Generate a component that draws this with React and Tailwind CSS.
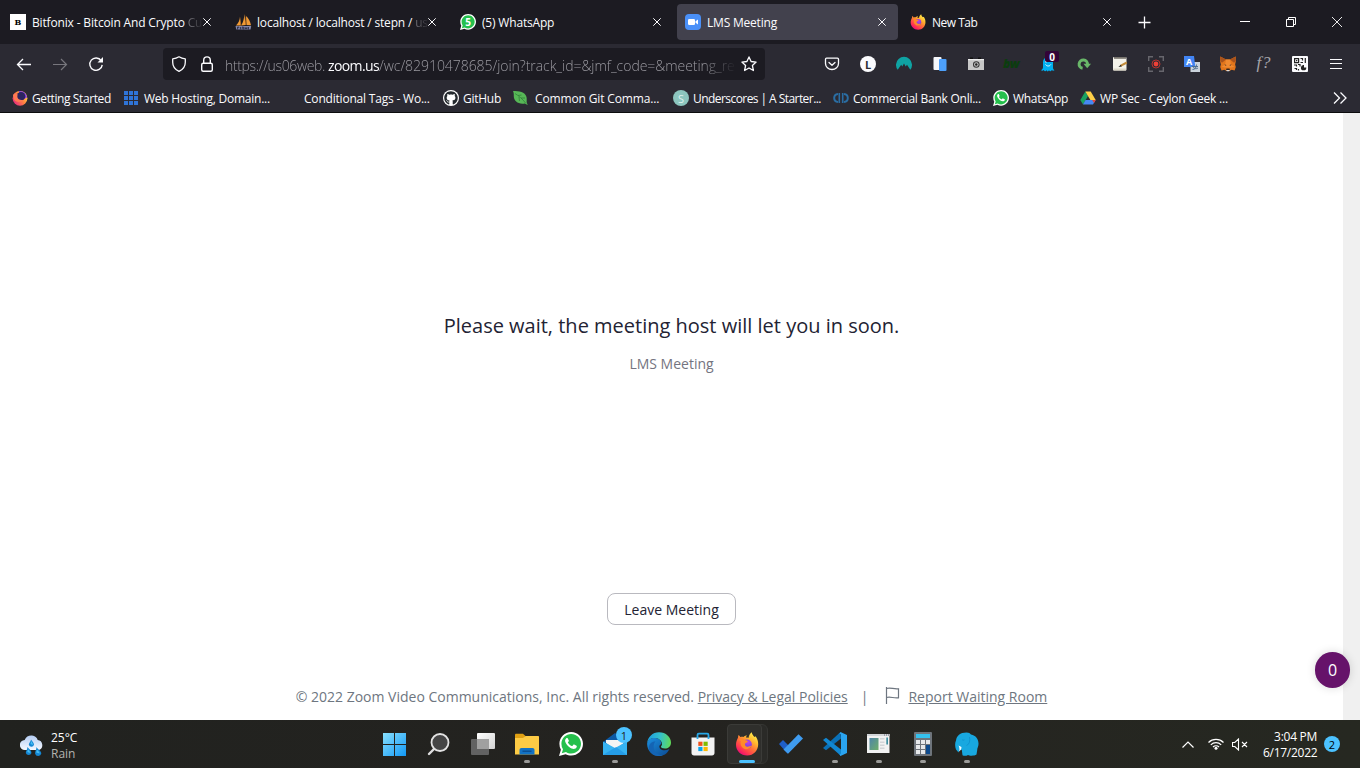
import React from "react";
import { FaGithub } from "react-icons/fa";

/* ---------- shared icons ---------- */

function Firefox({ id, className }) {
  return (
    <svg viewBox="0 0 24 24" className={className}>
      <defs>
        <linearGradient id={id + "a"} x1="0.85" y1="0.05" x2="0.2" y2="0.95">
          <stop offset="0" stopColor="#fff44f" />
          <stop offset="0.3" stopColor="#ffb52e" />
          <stop offset="0.55" stopColor="#ff7139" />
          <stop offset="0.8" stopColor="#ff3750" />
          <stop offset="1" stopColor="#eb0878" />
        </linearGradient>
        <radialGradient id={id + "b"} cx="0.6" cy="0.3" r="0.8">
          <stop offset="0" stopColor="#c13fe6" />
          <stop offset="0.5" stopColor="#8a42e0" />
          <stop offset="1" stopColor="#5b3fd0" />
        </radialGradient>
      </defs>
      <path
        fill={"url(#" + id + "a)"}
        d="M12.2 23.500C5.800 23.500 1 18.700 1 12.700c0-2.600.9-5.200 2-7 0-1 .2-1.800.6-2.600.8.6 1.300 1.200 1.700 2 1.200-.4 2.200-.4 3.200-.1C9.500 4 11 3.400 12 3.600c-.6.6-1 1.300-1.100 2 1-.1 1.800.1 2.500.4.6-2.500 1.600-4.500 3.400-5.700.2 2.100 1.400 3.300 2.700 4.600l1-.6c1.900 2.400 2.700 5 2.700 7.900 0 6-4.600 11.300-11 11.300z"
      />
      <circle cx="12.200" cy="12.200" r="4.600" fill={"url(#" + id + "b)"} />
      <path fill="#ff8a2a" d="M3.500 7.700c2.200-1.400 4.800-.9 6.300.4 1.700.3 2.600.7 3.100 1.300-.9 1.500-2.300 1.300-2.900 2.300-.3 1.500.6 2.800 2.400 3.100 1.500.2 2.500-.8 3.900-.7-1.200 2.800-4.400 3.800-7.100 2.600C5.600 15 5 10.800 6 9z" />
    </svg>
  );
}

function GettingStarted({ className }) {
  return (
    <svg viewBox="0 0 16 16" className={className}>
      <defs>
        <linearGradient id="gsa" x1="0.9" y1="0.2" x2="0.1" y2="0.8">
          <stop offset="0" stopColor="#ffd84a" />
          <stop offset="0.45" stopColor="#ff8440" />
          <stop offset="1" stopColor="#e8307a" />
        </linearGradient>
      </defs>
      <circle cx="8" cy="8.300" r="7.400" fill="url(#gsa)" />
      <path fill="#8a3de8" d="M7 1c4.500-.4 7.500 2.600 8 6.500L12 9 7 2.500z" />
      <circle cx="9" cy="6.200" r="4.300" fill="#2c2560" />
      <path fill="#ff7a52" d="M1 5c1.500-2 3-1.800 4.200-1C6 5 5 6 5.500 7.500c.5 2 3 3 6 2.200-1.500 3-8 3-9.500-.2z" />
    </svg>
  );
}

function WhatsAppIcon({ className, glyph, children }) {
  return (
    <span className={"relative grid shrink-0 place-items-center " + className}>
      <svg viewBox="0 0 24 24" className="absolute inset-0 size-full">
        <path fill="#fff" d="M12.200 0C18.700 0 24 5.200 24 11.800S18.700 23.600 12.200 23.600c-2 0-4-.5-5.600-1.400L0 24l1.900-6.300A11.700 11.700 0 0 1 .4 11.800C.4 5.200 5.700 0 12.200 0z" />
        <path fill="#25c04c" d="M12.200 2c5.400 0 9.800 4.400 9.800 9.800s-4.400 9.800-9.800 9.800c-1.900 0-3.700-.5-5.200-1.500L2.800 21.300l1.200-4A9.700 9.700 0 0 1 2.400 11.800C2.400 6.400 6.800 2 12.200 2z" />
        {glyph && (
          <path fill="#fff" d="M8.800 6.500c-.3-.6-1.300-.5-1.700 0-.8.800-1.200 1.800-.9 3 .5 2 2.200 4.300 4.300 5.800 1.600 1.200 3.800 2 5.300 1.500 1-.4 1.900-1.100 2-2.300 0-.4 0-.6-.3-.8l-2.300-1.100c-.4-.2-.6-.1-.9.2l-.9 1.100c-.2.2-.4.3-.7.1-1.500-.6-2.800-1.700-3.700-3.200-.2-.3-.1-.5.1-.7l.7-.9c.1-.2.1-.5 0-.7z" />
        )}
      </svg>
      {children}
    </span>
  );
}

function CloseX() {
  return (
    <svg viewBox="0 0 8 8" className="size-2 shrink-0" stroke="#fbfbfe" strokeWidth="1" fill="none">
      <path d="M.3.3l7.400 7.400M7.700.3L.3 7.700" />
    </svg>
  );
}

/* ---------- tab strip ---------- */

function Tab({ icon, title, faded, active, tracking }) {
  return (
    <div className={"mr-1 flex h-9 w-[221px] shrink-0 items-center rounded pr-3 pl-2 " + (active ? "bg-[#42414d]" : "")}>
      <span className="grid size-4 shrink-0 place-items-center">{icon}</span>
      <span className={"ml-1.5 min-w-0 flex-1 overflow-hidden pt-0.5 text-xs whitespace-nowrap text-[#fbfbfe] " + tracking}>
        {title}
        {faded && (
          <span className="bg-linear-to-r from-[#77767c] to-[#2a2930] bg-clip-text text-transparent">{faded}</span>
        )}
      </span>
      <CloseX />
    </div>
  );
}

function PhpMyAdmin() {
  return (
    <svg viewBox="0 0 17 16" className="h-4 w-[17px] max-w-none">
      <path fill="#f09a35" d="M5 2.500C4.800 6 3.500 9 1 11.500h4.600zM9.500 0C9 4 8.500 8 6.200 11.500l4.300-.5zM11 2c2.500 2 4.300 5.500 5 9.200L11.500 11z" />
      <path fill="#c87820" d="M5.300 3l1 8.500h-1zM10 .5l1 10.500h-1z" />
      <path fill="#8286ab" d="M.5 12h15.700l-.7 3.500H1.300z" />
      <path stroke="#25253a" strokeWidth=".8" fill="none" d="M2.500 15.500V13h1.300v1.300M5.500 13v2.500M7.200 15v-2h1.200v2.500M10 13v2l1-1.200 1 1.200v-2M13.500 15.500V13" />
    </svg>
  );
}

function TabStrip() {
  return (
    <div className="flex h-11 items-center bg-[#1c1b22] pl-0.5">
      <Tab
        title="Bitfonix - Bitcoin And Crypto "
        faded="Cu"
        tracking="tracking-[-0.16px]"
        icon={<span className="grid size-4 place-items-center bg-white font-['DejaVu_Serif',serif] text-[8px] leading-none font-bold text-black">B</span>}
      />
      <Tab title="localhost / localhost / stepn / " faded="us" tracking="tracking-[-0.18px]" icon={<PhpMyAdmin />} />
      <Tab
        title="(5) WhatsApp"
        tracking="tracking-[-0.18px]"
        icon={
          <WhatsAppIcon className="size-4">
            <span className="relative text-[10px] leading-none font-bold text-white">5</span>
          </WhatsAppIcon>
        }
      />
      <Tab
        active
        title="LMS Meeting"
        tracking="tracking-[-0.2px]"
        icon={
          <svg viewBox="0 0 16 16" className="size-4">
            <rect width="16" height="16" rx="4" fill="#4a90f8" />
            <rect x="3" y="5" width="7" height="6" rx="1.300" fill="#fff" />
            <path fill="#fff" d="M10.500 7.200L13 5.400v5.200l-2.500-1.800z" />
          </svg>
        }
      />
      <Tab title="New Tab" tracking="tracking-[-0.5px]" icon={<Firefox id="t" className="size-4" />} />
      <svg viewBox="0 0 13 13" className="ml-[11px] size-[13px]" stroke="#fbfbfe" fill="none">
        <path d="M6.500 .5v12M.5 6.500h12" strokeWidth="1.300" />
      </svg>
      <div className="ml-auto flex h-full items-center">
        <svg viewBox="0 0 10 10" className="mr-9 size-2.5" stroke="#fff" fill="none">
          <path d="M0 4.500h10" />
        </svg>
        <svg viewBox="0 0 10 10" className="mr-9 size-2.5" stroke="#fff" fill="none">
          <path d="M.5 2.500h7v7h-7zM2.500 2.500v-2h7v7h-2" />
        </svg>
        <svg viewBox="0 0 10 10" className="mr-[18px] size-2.5" stroke="#fff" fill="none" strokeWidth=".9">
          <path d="M0 0l10 10M10 0L0 10" />
        </svg>
      </div>
    </div>
  );
}

/* ---------- navigation toolbar ---------- */

const extensions = [
  <svg key="pocket" viewBox="0 0 16 16" className="size-4" fill="none" stroke="#fbfbfe" strokeWidth="1.300" strokeLinejoin="round" strokeLinecap="round">
    <path d="M2.500 2.200h11c.6 0 1 .4 1 1V7.500a6.500 6 0 0 1-13 0V3.200c0-.6.4-1 1-1z" />
    <path d="M5 6.400l3 2.800 3-2.800" />
  </svg>,
  <span key="l" className="grid size-4 place-items-center rounded-full bg-[#fbfbfe] text-[11px] leading-none font-bold text-[#2b2a33]">L</span>,
  <svg key="nord" viewBox="0 0 16 16" className="size-4">
    <path fill="#0fa3a3" d="M1.700 13.800A8 8 0 1 1 14.300 13.800L11 8.800 9.700 10.600 8 7.600 6.300 10.600 5.200 8.800z" />
  </svg>,
  <svg key="tabs" viewBox="0 0 16 16" className="size-4">
    <rect x="1.500" y="1" width="8" height="13" rx="1" fill="#f5f7fb" />
    <rect x="7" y="3" width="7.500" height="12" rx="1" fill="#4da0fb" />
  </svg>,
  <svg key="camera" viewBox="0 0 16 16" className="size-4">
    <path fill="#111" d="M2 1.500h3v2H2zM10 1.500h3v2h-3z" />
    <rect x="0" y="3" width="16" height="11" fill="#c7c7c7" />
    <path fill="#eee" d="M0 3h16v1.200H0z" />
    <circle cx="8.300" cy="8.500" r="3.300" fill="#333" />
    <circle cx="8.300" cy="8.500" r="2.300" fill="#c4c4c4" />
    <circle cx="8.300" cy="8.500" r="1.200" fill="#222" />
  </svg>,
  <span key="bw" className="-ml-0.5 text-[12px] leading-none font-extrabold tracking-[-0.5px] text-[#0b3d0f] italic">bw</span>,
  <span key="ghost" className="relative flex size-4">
    <svg viewBox="0 0 16 16" className="size-4">
      <path fill="#00aef0" d="M3 6a5 5 0 0 1 10 0v5.500c0 1.500.7 2 1.500 2.700-1 .8-2 .5-2.700-.2-.8 1.500-2 1.500-2.800.3-.7 1.500-1.800 1.500-2.500 0-.8 1.200-2 1.200-2.700-.3-.8.7-1.900.9-2.800.2C2.500 13.400 3 12.500 3 11z" />
      <path stroke="#e8faff" strokeWidth="1" fill="none" d="M5.500 8.500c1.500 2 4 2 5.300 0" />
      <circle cx="6" cy="5.500" r="1" fill="#fff" />
    </svg>
    <span className="absolute -top-[5px] left-[5px] grid h-[11px] w-3.5 place-items-center rounded-xs bg-[#330438] text-[10px] leading-none font-bold text-white">0</span>
  </span>,
  <svg key="arrow" viewBox="0 0 16 16" className="size-4">
    <path d="M6.600 12.300A4.200 4.200 0 1 1 11.500 8.400" fill="none" stroke="#69b769" strokeWidth="3" />
    <path fill="#69b769" d="M7.500 7.700h7.500l-3.800 4.600z" />
  </svg>,
  <svg key="note" viewBox="0 0 16 16" className="size-4">
    <rect x="1" y="1" width="13.500" height="13.500" rx="1" fill="#f4f2ea" />
    <path fill="#77736d" d="M2 1h12v1.800H2z" />
    <path fill="#ddd8c9" d="M1.500 12.500h12.500v2H1.500z" />
    <path stroke="#c28b39" strokeWidth="2" d="M14.800 6.500L8.500 9.800" />
    <path fill="#222" d="M8.900 8.800l.8 1.700-3.300.6z" />
  </svg>,
  <svg key="record" viewBox="0 0 16 16" className="size-4" fill="none">
    <path stroke="#67666d" strokeWidth="1.400" d="M.7 5V.7H5M11 .7h4.300V5M15.300 11v4.300H11M5 15.300H.7V11" />
    <circle cx="8" cy="8" r="4" stroke="#b63430" />
    <circle cx="8" cy="8" r="2.400" fill="#ef4138" />
  </svg>,
  <span key="translate" className="relative size-4">
    <svg viewBox="0 0 16 16" className="absolute inset-0 size-4">
      <rect x="6.500" y="6" width="9.500" height="10" fill="#cbd3dc" />
      <path fill="#4285f4" d="M0 0h10l1.300 11H0z" />
      <path stroke="#4c6d91" fill="none" d="M8 10.500h6M9 9.500c0 3 3 4 5 2.500M12.500 8.500c0 3-1.500 5-4 5" />
    </svg>
    <span className="absolute top-px left-[2px] text-[9px] leading-none font-bold text-white">A</span>
  </span>,
  <svg key="fox" viewBox="0 0 16 16" className="size-4">
    <path fill="#e2761b" d="M.3.500L6 3.500h4L15.700.500 15.900 5l-.8 3.500.7 2.500-1.200 3.500-3-.8L9.500 15h-3l-2-1.300-3 .8L.2 11 .9 8.500.1 5z" />
    <path fill="#a8521c" d="M.3.500L6 3.500 2 6.700.3 5zM15.700.500L10 3.500l4 3.200L15.800 5z" />
    <path fill="#f08a30" d="M6 3.500h4l1 5.500 3.500 1.500-3 1H4.500l-3-1L5 9z" />
    <path fill="#3a2a22" d="M4.300 8.300l2 .8-.3 1zM11.700 8.300l-2 .8.3 1zM6.500 12.500h3l.4 1.400H6.100z" />
    <path fill="#ddd" d="M6.300 14h3.400l-.5 1.200H6.800z" />
  </svg>,
  <span key="f" className="-mt-1 font-['Liberation_Serif',serif] text-[17px] leading-none tracking-[0.8px] whitespace-nowrap text-[#a5a4a9] italic">f?</span>,
  <svg key="qr" viewBox="0 0 16 16" className="size-4">
    <rect width="16" height="16" rx="1" fill="#fbfbfe" />
    <path fill="none" stroke="#222" strokeWidth="1.200" d="M2.600 2.600h4v4h-4zM8.500 2.500h2v2M13.300 2v5M8.500 6.500h2.500M2 9h2.500v1.500M6 8.500h2v2M2.500 12.500h2v1.500M6.500 13v1.500" />
    <path fill="#222" d="M4 4h1.300v1.300H4zM12 9v2.500h2.300A2.700 2.700 0 1 1 12 9z" />
  </svg>,
  <svg key="menu" viewBox="0 0 12 16" className="h-4 w-3" stroke="#fbfbfe" strokeWidth="1.200">
    <path d="M0 3.500h12M0 7.500h12M0 12.500h12" />
  </svg>,
];

function NavBar() {
  return (
    <div className="flex h-10 items-center">
      <div className="flex w-[163px] shrink-0 items-center pl-4">
        <svg viewBox="0 0 16 16" className="size-4" fill="none" stroke="#fbfbfe" strokeWidth="1.300">
          <path d="M15 8.500H1.500M7 3L1.500 8.500 7 14" />
        </svg>
        <svg viewBox="0 0 16 16" className="ml-5 size-4" fill="none" stroke="#77767d" strokeWidth="1.200">
          <path d="M1 8.500h13.500M9 3l5.500 5.500L9 14" />
        </svg>
        <svg viewBox="0 0 16 16" className="ml-5 size-4" fill="none" stroke="#fbfbfe" strokeWidth="1.400">
          <path d="M13.200 4.700A6.200 6.200 0 1 0 14.200 8.800" />
          <path d="M9.500 6.500H15V1z" fill="#fbfbfe" stroke="none" />
        </svg>
      </div>
      <div className="flex h-8 w-[602px] shrink-0 items-center rounded bg-[#1c1b22] px-2">
        <svg viewBox="0 0 16 16" className="size-4" fill="none" stroke="#fbfbfe" strokeWidth="1.300" strokeLinejoin="round">
          <path d="M8 .8C6.200 2 4 2.700 1.700 2.900v3.300C1.700 10 4 13.500 8 15.300c4-1.800 6.300-5.300 6.300-9.100V2.900C12 2.700 9.800 2 8 .8z" />
        </svg>
        <svg viewBox="0 0 16 16" className="ml-3 size-4" fill="none" stroke="#fbfbfe" strokeWidth="1.400">
          <rect x="2.700" y="7.200" width="10.600" height="8" rx="1.500" />
          <path d="M4.700 7V4.200a3.300 3.300 0 0 1 6.600 0V7" />
        </svg>
        <div className="ml-2.5 w-[512px] overflow-hidden mask-r-from-[93%] mask-r-to-100% pt-[3px] text-sm leading-5 font-light whitespace-nowrap text-[#9a99a0]">
          <span className="inline-block w-[103px] tracking-[-0.35px]">https://us06web.</span>
          <span className="inline-block w-[51px] font-normal tracking-[-0.6px] text-[#fbfbfe]">zoom.us</span>
          <span className="tracking-[-0.05px]">/wc/82910478685/join?track_id=&amp;jmf_code=&amp;meeting_re</span>
        </div>
        <svg viewBox="0 0 16 16" className="ml-auto size-4 shrink-0" fill="none" stroke="#fbfbfe" strokeWidth="1.300" strokeLinejoin="round">
          <path d="M8 .900l2.100 4.600 5 .6-3.700 3.400 1 5L8 12l-4.400 2.500 1-5L.9 6.100l5-.6z" />
        </svg>
      </div>
      <div className="ml-auto flex items-center pr-1.5">
        {extensions.map((icon, i) => (
          <span key={i} className="grid h-9 w-9 place-items-center">
            {icon}
          </span>
        ))}
      </div>
    </div>
  );
}

/* ---------- bookmarks ---------- */

const bookmarks = [
  { title: "Getting Started", box: "w-[112px]", tracking: "tracking-[-0.4px]", icon: <GettingStarted className="size-4" /> },
  {
    title: "Web Hosting, Domain...",
    box: "w-[160px]",
    tracking: "tracking-[-0.23px]",
    icon: (
      <svg viewBox="0 0 14 14" className="size-3.5 -translate-x-px" fill="#2f74d8">
        <path d="M0 0h4v4H0zM5 0h4v4H5zM10 0h4v4h-4zM0 5h4v4H0zM5 5h4v4H5zM10 5h4v4h-4zM0 10h4v4H0zM5 10h4v4H5zM10 10h4v4h-4z" />
      </svg>
    ),
  },
  { title: "Conditional Tags - Wo...", box: "w-[159px]", tracking: "tracking-[-0.2px]", icon: null },
  {
    title: "GitHub",
    box: "w-[72px]",
    tracking: "tracking-[-0.27px]",
    icon: (
      <span className="grid size-4 place-items-center rounded-full bg-white">
        <FaGithub className="size-[14px] text-[#24292e]" />
      </span>
    ),
  },
  {
    title: "Common Git Comma...",
    box: "w-[158px]",
    tracking: "tracking-[-0.14px]",
    icon: (
      <svg viewBox="0 0 16 16" className="size-4 -translate-x-0.5">
        <path fill="#57b757" d="M0 1c6 0 12 .5 13.500 6 .5 2.500 0 4 .2 5.500l1 2.500-3-1.500C5 14.500 1 11 .8 6.500.8 4 .8 3 0 1z" />
        <path stroke="#2c7a35" fill="none" strokeWidth=".7" d="M2 3.500c4 2.500 7 5 11 10M5 5.500l3.500-.5M8 8h4M6 7l.5 4" />
      </svg>
    ),
  },
  {
    title: "Underscores | A Starter...",
    box: "w-[160px]",
    tracking: "tracking-[-0.56px]",
    icon: <span className="grid size-4 place-items-center rounded-full bg-[#8cc5be] text-[11px] leading-none text-[#dff2ef]">S</span>,
  },
  {
    title: "Commercial Bank Onli...",
    box: "w-[160px]",
    tracking: "tracking-[-0.25px]",
    icon: (
      <svg viewBox="0 0 16 16" className="size-4" fill="none" stroke="#2a6da3">
        <path strokeWidth="2" d="M5 4C2.500 4.300 1.200 6 1.200 8S2.500 11.700 5 12M11 4c2.500.3 3.800 2 3.800 4s-1.300 3.700-3.800 4" />
        <path strokeWidth="1.600" d="M6.300 3v10M9.700 3v10" />
      </svg>
    ),
  },
  { title: "WhatsApp", box: "w-[87px]", tracking: "tracking-[-0.3px]", icon: <WhatsAppIcon glyph className="size-4" /> },
  {
    title: "WP Sec - Ceylon Geek ...",
    box: "w-[160px]",
    tracking: "tracking-[-0.2px]",
    icon: (
      <svg viewBox="0 0 16 16" className="size-4">
        <path fill="#1aa260" d="M5.300 1.500L8 6 3 14.500.3 10z" />
        <path fill="#ffcf48" d="M5.300 1.500h5.400L15.700 10h-5.300z" />
        <path fill="#4688f4" d="M5.500 10h10.200L13 14.500H3z" />
        <path fill="#ea4335" d="M12.200 10h3.500L14 13z" />
      </svg>
    ),
  },
];

function Bookmarks() {
  return (
    <div className="flex h-7 items-center pl-3">
      {bookmarks.map((b) => (
        <div key={b.title} className={"flex shrink-0 items-center gap-1 whitespace-nowrap " + b.box}>
          <span className="grid size-4 shrink-0 place-items-center">{b.icon}</span>
          <span className={"pt-px text-xs text-[#fbfbfe] " + b.tracking}>{b.title}</span>
        </div>
      ))}
      <svg viewBox="0 0 14 14" className="mr-[13px] ml-auto size-3.5" fill="none" stroke="#fbfbfe" strokeWidth="1.300">
        <path d="M1 1.500L6.500 7 1 12.500M7.500 1.500L13 7l-5.500 5.500" />
      </svg>
    </div>
  );
}

/* ---------- page ---------- */

function Page() {
  return (
    <main className="flex h-[607px] bg-white">
      <div className="flex flex-1 flex-col items-center text-sm">
        <h1 className="mt-[199px] text-xl leading-7 text-[#232333]">Please wait, the meeting host will let you in soon.</h1>
        <p className="mt-3.5 leading-5 text-[#747480]">LMS Meeting</p>
        <button className="mt-[219px] h-8 w-[129px] rounded-lg border border-[#b9b9bf] pt-px text-[#232333]">Leave Meeting</button>
        <footer className="mt-[62px] flex items-center leading-5 text-[#6e7680]">
          <span className="whitespace-pre">© 2022 Zoom Video Communications, Inc. All rights reserved. </span>
          <span className="underline">Privacy &amp; Legal Policies</span>
          <span className="ml-[13px]">|</span>
          <svg viewBox="0 0 15 17" className="mt-[-3px] ml-[17px] h-[17px] w-[15px]" fill="none" stroke="#6e7680" strokeWidth="1.200">
            <path d="M1.500 0v17M1.500 1.500c4-1.500 7 1 12 .3v9c-5 .7-8-1.600-12-.3" />
          </svg>
          <span className="ml-2 underline">Report Waiting Room</span>
        </footer>
      </div>
      <div className="relative w-[17px] bg-[#f0f0f0]">
        <div className="absolute right-2.5 bottom-8 grid h-9 w-[35px] place-items-center rounded-full bg-[#66136a] text-base text-white shadow-[0_0_10px_rgba(0,0,0,0.15)]">0</div>
      </div>
    </main>
  );
}

/* ---------- taskbar ---------- */

const apps = [
  {
    name: "start",
    icon: (
      <svg viewBox="0 0 24 24" className="size-6">
        <defs>
          <linearGradient id="win" gradientUnits="userSpaceOnUse" x1="0" y1="0" x2="24" y2="24">
            <stop offset="0" stopColor="#8be2ff" />
            <stop offset="1" stopColor="#0f96f5" />
          </linearGradient>
        </defs>
        <path fill="url(#win)" d="M0 1h11v11H0zM12 1h11v11H12zM0 13h11v11H0zM12 13h11v11H12z" />
      </svg>
    ),
  },
  {
    name: "search",
    icon: (
      <svg viewBox="0 0 24 24" className="size-6" fill="none">
        <path stroke="#dedede" strokeWidth="2.400" strokeLinecap="round" d="M7.500 16.500L2 22" />
        <circle cx="13" cy="10.500" r="8.500" fill="#454545" stroke="#e2e2e2" strokeWidth="1.800" />
      </svg>
    ),
  },
  {
    name: "task-view",
    icon: (
      <svg viewBox="0 0 24 24" className="size-6">
        <defs>
          <linearGradient id="tv" x1="0" y1="0" x2="1" y2="1">
            <stop offset="0" stopColor="#fff" />
            <stop offset="1" stopColor="#d2d2d2" />
          </linearGradient>
        </defs>
        <rect y="7" width="18" height="16" rx="1" fill="#626262" />
        <rect x="6" y="1" width="18" height="16" rx="1" fill="url(#tv)" />
        <path fill="#a0a0a0" d="M6 7h12v10H6z" />
      </svg>
    ),
  },
  {
    name: "explorer",
    dot: true,
    icon: (
      <svg viewBox="0 0 24 24" className="size-6">
        <path fill="#e0a013" d="M0 3c0-.7.5-1.200 1.300-1.200H8L10.500 4 9 6H0z" />
        <path fill="#fdcb45" d="M0 6h8l2.500-2H23c.6 0 1 .4 1 1v17.500H0z" />
        <path fill="#1272c4" d="M4.500 22.500V18c0-1.200.8-2 2-2h11c1.200 0 2 .8 2 2v4.500z" />
        <path fill="#0a4f94" d="M7.500 18.500h9v1.500h-9z" />
      </svg>
    ),
  },
  { name: "whatsapp", icon: <WhatsAppIcon glyph className="size-6" /> },
  {
    name: "mail",
    dot: true,
    icon: (
      <span className="relative size-6">
        <svg viewBox="0 0 24 24" className="size-6">
          <path fill="#0c59a4" d="M0 10L12 1l12 9-12 8z" />
          <path fill="#f4f4f4" d="M3 8h18v3l-9 6.500L3 11z" />
          <path fill="#36b3f2" d="M0 9.500l12 6.500 12-6.500V23H0z" />
          <path fill="#1a8de0" d="M0 23l13-8 11 8z" opacity=".6" />
        </svg>
        <span className="absolute -top-[5px] left-[13px] grid size-4 place-items-center rounded-full bg-[#4cc2ff] text-[11px] leading-none text-[#222]">1</span>
      </span>
    ),
  },
  {
    name: "edge",
    icon: (
      <svg viewBox="0 0 24 24" className="size-6">
        <defs>
          <linearGradient id="e1" x1="0" y1="0.3" x2="1" y2="0.4">
            <stop offset="0" stopColor="#1b9de2" />
            <stop offset="0.55" stopColor="#35c1c9" />
            <stop offset="1" stopColor="#5fd95a" />
          </linearGradient>
          <linearGradient id="e2" x1="0" y1="0" x2="1" y2="1">
            <stop offset="0" stopColor="#1b8fe0" />
            <stop offset="1" stopColor="#0c4a92" />
          </linearGradient>
        </defs>
        <path fill="url(#e2)" d="M.2 11C1 7 5 5.500 8.500 6c4 .5 6 3.500 5.800 6-1.800 1-2.500 2.300-1.500 4.200 1.500 2.500 6 2.800 9.600.8C20 22 16.500 24 12 24 5 24-.5 18 .2 11z" />
        <path fill="#1464b4" d="M8.500 9.500C6 12 6 17 8.500 20c1.800 2.200 4.500 3.500 7.500 3-5 2.500-11.500.5-14-5C1 13 4 9.500 8.500 9.500z" />
        <path fill="url(#e1)" d="M.2 11C.8 5 5.500.2 12 .2c7 0 12 5 12 10.300 0 4-3 6-6 6-2.500 0-4.300-1-4-2 .2-.7 1.200-1.200 1-3C14.500 8 11 6 7.500 6 4 6 1 8 .2 11z" />
      </svg>
    ),
  },
  {
    name: "store",
    icon: (
      <svg viewBox="0 0 24 24" className="size-6">
        <path fill="#f3f3f3" d="M.5 5.500h23V21c0 1.500-1 2.500-2.500 2.500H3C1.500 23.500.5 22.500.5 21z" />
        <path fill="none" stroke="#28a8e8" strokeWidth="1.800" d="M6.500 7V3c0-.8.5-1.300 1.300-1.300h8.400c.8 0 1.300.5 1.300 1.300v4" />
        <path fill="#f1511b" d="M7.300 9.700h4.200v4.200H7.300z" />
        <path fill="#80bb03" d="M12.500 9.700h4.200v4.200h-4.200z" />
        <path fill="#08a4ee" d="M7.300 14.900h4.200v4.200H7.300z" />
        <path fill="#fbb904" d="M12.500 14.900h4.200v4.200h-4.200z" />
      </svg>
    ),
  },
  { name: "firefox", active: true, icon: <Firefox id="f" className="size-6" /> },
  {
    name: "todo",
    icon: (
      <svg viewBox="0 0 24 24" className="size-6">
        <path fill="#1f5fc9" d="M0 12l4-4 9 9-4.500 4.500z" />
        <path fill="#3f9cf0" d="M4.500 17.500L19.500 2.300 24 6.500 9 21.700z" />
      </svg>
    ),
  },
  {
    name: "vscode",
    dot: true,
    icon: (
      <svg viewBox="0 0 24 24" className="size-6">
        <path fill="#0a71b8" d="M17.500 0L18 6.500 3 18.300 0 16z" />
        <path fill="#1187d2" d="M0 8l3-2.200L18 17.500V24z" />
        <path fill="#2aa4f0" d="M17.500 0L24 3v18l-6.500 3-1-1.500 1.500-1V2.500l-1.500-1z" />
      </svg>
    ),
  },
  {
    name: "editor",
    dot: true,
    icon: (
      <svg viewBox="0 0 24 24" className="size-6">
        <defs>
          <linearGradient id="ed" x1="0" y1="0" x2="1" y2="1">
            <stop offset="0" stopColor="#4e84a8" />
            <stop offset="1" stopColor="#6fae6a" />
          </linearGradient>
        </defs>
        <rect x="0" y="2" width="22.500" height="19" fill="#f2f2f2" />
        <path fill="#d2d5d8" d="M0 2h22.500v2H0z" />
        <path fill="#667" d="M17 2.500h1v1h-1zM19 2.500h1v1h-1zM21 2.500h1v1h-1z" />
        <rect x="2.500" y="6" width="9" height="12" fill="url(#ed)" />
        <path fill="#d2d5d8" d="M13 6h4.500v1.500H13zM13 9.500h4.500V11H13zM13 12.500h4.500V14H13zM13 15.500h4.500V17H13z" />
        <path fill="#3f8fa0" d="M19.300 5.500H21v7h-1.700z" />
      </svg>
    ),
  },
  {
    name: "calculator",
    dot: true,
    icon: (
      <svg viewBox="0 0 24 24" className="size-6">
        <rect x="3" y="0" width="18" height="24" rx="1" fill="#6e747b" />
        <rect x="5" y="2" width="14" height="4" fill="#35c1ee" />
        <path fill="#e6e8ea" d="M5 8h4v4H5zM10 8h4v4h-4zM15 8h4v4h-4zM5 13h4v4H5zM10 13h4v4h-4zM5 18h4v4H5zM10 18h4v4h-4z" />
        <path fill="#0d4a8c" d="M15 13h4v9h-4z" />
      </svg>
    ),
  },
  {
    name: "elephant",
    dot: true,
    icon: (
      <svg viewBox="0 0 24 24" className="size-6">
        <path fill="#18a8e0" d="M11.500.500c2.500 0 3.500.8 4.500 2 5 .8 7.700 5 7.500 9.500 0 2.500-1.300 4-1.300 6l-.7 4.500c-1.800 1.500-7 1.500-8.500.5-1.500 1-4 1.200-5.500.3L6.800 18 4.500 17.500l-1 3-2.500-3C0 15-.3 11 1 8.500 1.500 4 5 .5 11.500.500z" />
        <path fill="none" stroke="#0f8fcb" strokeWidth=".8" d="M14.500 5c.8 3.500 0 7.500-3 8.500M7 7.500c.8.8 1.800.8 2.500.3" />
        <path fill="#f4fbff" d="M3.500 13.500l3 1.500c0 2.500-1 3.500-2.500 4.500.6-2 .6-4-.5-6z" />
      </svg>
    ),
  },
];

function TaskbarApp({ app }) {
  return (
    <div className="relative grid h-12 w-11 place-items-center">
      {app.active && (
        <>
          <span className="absolute top-1 left-1.5 h-10 w-[37px] rounded-md border border-[#353532] bg-[#2a2a27]" />
          <span className="absolute top-1 left-[2px] h-10 w-[35px] rounded border border-[#3b3b38] bg-[#2f2f2c]" />
        </>
      )}
      <span className="relative flex">{app.icon}</span>
      {app.dot && <span className="absolute bottom-[5px] h-[3px] w-1.5 rounded-full bg-[#9a9a98]" />}
      {app.active && <span className="absolute bottom-[5px] h-[3px] w-4 rounded-full bg-[#4cc2ff]" />}
    </div>
  );
}

function Taskbar() {
  return (
    <div className="flex h-12 items-center bg-linear-to-r from-[#21221f] via-[#242320] to-[#262821] text-xs text-white">
      <div className="flex w-[373px] items-center pl-5">
        <svg viewBox="0 0 24 22" className="mt-[3px] h-[22px] w-6">
          <defs>
            <linearGradient id="cl" x1="0" y1="0" x2="0" y2="1">
              <stop offset="0" stopColor="#b4cdf3" />
              <stop offset="1" stopColor="#f5f8ff" />
            </linearGradient>
          </defs>
          <path fill="url(#cl)" d="M5 15a5 5 0 0 1-.3-10C6 1.500 9 .2 12 .5s5 2 5.700 4.500A5.200 5.200 0 0 1 19 15z" />
          <path fill="#1487d4" d="M11 4.500c1.500 2 3 3.500 3 5.200a2.700 2.700 0 0 1-5.200 0c0-1.700 2-3 2.200-5.200zM7.500 12c1.500 2 4 3.500 4 6a3 3 0 0 1-5.700 0c0-2 1.500-3.500 1.700-6zM16.500 12c1.500 2.500 4.800 4 4.800 6.500a3.200 3.200 0 0 1-6.200.3c-.3-2.300 1.400-4 1.400-6.800z" />
          <path fill="#47bdf2" d="M11.300 6c.8 1.500 1.700 2.500 1.700 4l-2.500-1zM8 14c1 1.500 2.300 2.500 2.300 4l-3-1zM17 14.500c1 1.500 2.700 2.500 2.700 4l-3.500-1z" />
        </svg>
        <div className="ml-[7px] pt-[3px] leading-4">
          <div>25°C</div>
          <div className="text-[#b4b4b0]">Rain</div>
        </div>
      </div>
      <div className="flex">
        {apps.map((app) => (
          <TaskbarApp key={app.name} app={app} />
        ))}
      </div>
      <div className="ml-auto flex items-center pr-5">
        <svg viewBox="0 0 12 7" className="h-[7px] w-3" fill="none" stroke="#fff" strokeWidth="1.200">
          <path d="M.5 6.500L6 1l5.500 5.500" />
        </svg>
        <svg viewBox="0 0 16 12" className="ml-3.5 h-3 w-4" fill="none" stroke="#fff" strokeWidth="1.200">
          <path d="M.5 4.500a10.500 10.500 0 0 1 15 0M2.800 6.800a7.300 7.300 0 0 1 10.400 0M5 9a4.300 4.300 0 0 1 6 0" />
          <circle cx="8" cy="10.300" r="1.500" fill="#fff" stroke="none" />
        </svg>
        <svg viewBox="0 0 16 13" className="ml-2 h-[13px] w-4" fill="none" stroke="#fff" strokeWidth="1.100">
          <path d="M.5 4.500h2.300L6.500 1v11L2.800 8.500H.5zM10 4l5 5M15 4l-5 5" />
        </svg>
        <div className="ml-[15px] w-[54px] pt-px text-right leading-4 tracking-[-0.28px] whitespace-nowrap">
          <div>3:04 PM</div>
          <div>6/17/2022</div>
        </div>
        <span className="ml-[7px] grid size-4 place-items-center rounded-full bg-[#4cc2ff] text-[11px] leading-none text-black">2</span>
      </div>
    </div>
  );
}

export default function App() {
  return (
    <div className="flex h-[768px] w-[1360px] flex-col overflow-hidden font-['Open_Sans','Noto_Sans',sans-serif]">
      <TabStrip />
      <div className="h-[69px] border-b border-[#0c0c0d] bg-[#2b2a33]">
        <NavBar />
        <Bookmarks />
      </div>
      <Page />
      <Taskbar />
    </div>
  );
}
